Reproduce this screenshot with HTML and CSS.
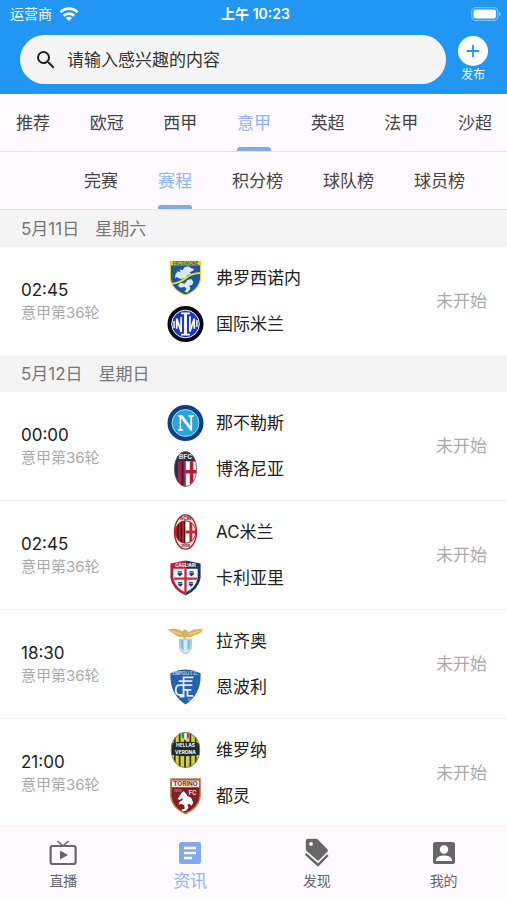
FILE: index.html
```
<!DOCTYPE html>
<html lang="zh-CN">

<head>
    <meta charset="UTF-8">
    <meta name="viewport" content="width=device-width, initial-scale=1.0">
    <title>意甲赛程</title>
    <link rel="stylesheet" href="styles.css">
</head>

<body>
    <header class="header">
        <div class="status">
            <div class="carrier">
                <span>运营商</span>
                <svg width="20" height="14" viewBox="0 0 20 14" fill="none" stroke="#fff" stroke-width="2.8">
                    <path d="M1.5 5.2a12 12 0 0 1 17 0M4.7 8.8a7.5 7.5 0 0 1 10.6 0" />
                    <path d="M10 14L6.9 11a4.4 4.4 0 0 1 6.2 0z" fill="#fff" stroke="none" />
                </svg>
            </div>
            <span class="clock">上午 10:23</span>
            <svg class="battery" width="30" height="14" viewBox="0 0 30 14">
                <rect x=".7" y=".7" width="26" height="12.6" rx="3.6" fill="none" stroke="#fff" stroke-opacity=".4" stroke-width="1.2" />
                <rect x="2.5" y="2.4" width="22.4" height="9.2" rx="2" fill="#fff" />
                <path d="M28 4.8v4.4q1.6-.7 1.6-2.2t-1.6-2.2z" fill="#fff" fill-opacity=".5" />
            </svg>
        </div>
        <div class="toolbar">
            <label class="search">
                <svg width="24" height="24" viewBox="0 0 24 24" fill="#222">
                    <path d="M15.5 14h-.79l-.28-.27A6.47 6.47 0 0 0 16 9.5 6.5 6.5 0 1 0 9.5 16c1.61 0 3.09-.59 4.23-1.57l.27.28v.79l5 4.99L20.49 19l-4.99-5zm-6 0a4.5 4.5 0 1 1 0-9 4.5 4.5 0 0 1 0 9z" />
                </svg>
                <input type="text" placeholder="请输入感兴趣的内容" aria-label="搜索">
            </label>
            <button class="publish" type="button">
                <svg width="30" height="30" viewBox="0 0 30 30">
                    <circle cx="15" cy="15" r="15" fill="#fff" />
                    <path d="M15 8.8v12.4M8.8 15h12.4" stroke="#2196f3" stroke-width="1.8" />
                </svg>
                <span>发布</span>
            </button>
        </div>
    </header>

    <nav class="tabs tabs-league">
        <a href="#">推荐</a>
        <a href="#">欧冠</a>
        <a href="#">西甲</a>
        <a href="#" class="active">意甲</a>
        <a href="#">英超</a>
        <a href="#">法甲</a>
        <a href="#">沙超</a>
    </nav>
    <nav class="tabs tabs-section">
        <a href="#">完赛</a>
        <a href="#" class="active">赛程</a>
        <a href="#">积分榜</a>
        <a href="#">球队榜</a>
        <a href="#">球员榜</a>
    </nav>

    <main class="schedule">
        <h2 class="date"><span>5月11日</span><span>星期六</span></h2>
        <div class="match">
            <div class="info">
                <div class="time">02:45</div>
                <div class="round">意甲第36轮</div>
            </div>
            <div class="teams">
                <div class="team">
                    <!-- Frosinone -->
                    <svg class="crest" viewBox="0 0 38 38">
                        <path d="M3.5 2h31v17q-1 12-15.5 17.5Q4.5 31 3.5 19z" fill="#1d569c" stroke="#e3d72d" stroke-width="1.2" />
                        <path d="M3.5 2h31v4h-31z" fill="#d9cf3c" />
                        <text x="19" y="5.5" font-size="4.5" font-weight="700" text-anchor="middle" fill="#2c4f6d">FROSINONE</text>
                        <path d="M9 15l2-3 3 1-1-3 3 1 2-3 4-1 3 2 3 1-2 2-3 1 2 2-4 1-2 3-5 1-4-2-2 1z" fill="#dce8f4" />
                        <path d="M11 27l3-3 4 1 3-4 4-1 2 3-1 3-3 1 1 3-3 4-3-1 2-3-2-2-4 1z" fill="#dce8f4" />
                        <path d="M4.5 25q9-1 15-6t14.5-5" fill="none" stroke="#e9dc2b" stroke-width="2" />
                    </svg>
                    <span>弗罗西诺内</span>
                </div>
                <div class="team">
                    <!-- Inter -->
                    <svg class="crest" viewBox="0 0 38 38">
                        <circle cx="19" cy="19" r="18.5" fill="#05070f" />
                        <circle cx="19" cy="19" r="14.2" fill="#1838c4" stroke="#fff" stroke-width="1" />
                        <path d="M14.5 8h9M14.5 30h9" stroke="#fff" stroke-width="1.8" />
                        <path d="M19 8v22" stroke="#fff" stroke-width="3" />
                        <path d="M14.5 12v15M23.5 26V11" stroke="#fff" stroke-width="1.8" />
                        <path d="M14.5 27L10 13.5V24M23.5 27L28 13.5V24" stroke="#fff" stroke-width="1.8" fill="none" />
                        <path d="M7.3 16v7M30.7 15v7" stroke="#fff" stroke-width="1.4" />
                    </svg>
                    <span>国际米兰</span>
                </div>
            </div>
            <div class="state">未开始</div>
        </div>

        <h2 class="date"><span>5月12日</span><span>星期日</span></h2>
        <div class="match">
            <div class="info">
                <div class="time">00:00</div>
                <div class="round">意甲第36轮</div>
            </div>
            <div class="teams">
                <div class="team">
                    <!-- Napoli -->
                    <svg class="crest" viewBox="0 0 38 38">
                        <circle cx="19" cy="19" r="18.5" fill="#0a4187" />
                        <circle cx="19" cy="19" r="13.8" fill="#2aa5dc" stroke="#d5edf8" stroke-width=".8" />
                        <path d="M11.5 11H16l8 11V13l-2-.7V11h5.5v1.3l-1.7.7v14h-1.6L14.5 14.5V25l2 .7V27h-5v-1.3l1.5-.7V13l-1.5-.7z" fill="#fff" />
                    </svg>
                    <span>那不勒斯</span>
                </div>
                <div class="team">
                    <!-- Bologna -->
                    <svg class="crest" viewBox="0 0 38 38">
                        <clipPath id="bologna">
                            <ellipse cx="19" cy="19" rx="11.5" ry="18" />
                        </clipPath>
                        <g clip-path="url(#bologna)">
                            <path d="M7 0h24v38H7z" fill="#1c2b50" />
                            <path d="M11 11h4v27h-4z" fill="#b61d38" />
                            <path d="M19 11h13v27H19z" fill="#f6f3f3" />
                            <path d="M23.5 11H27v27h-3.5zM19 20h12v3.5H19z" fill="#bb1c35" />
                            <path d="M17 11h2v27h-2z" fill="#b61d38" />
                            <path d="M7 1h24v11q-12-4-24 0z" fill="#26334e" />
                        </g>
                        <text x="19" y="9" font-size="7" font-weight="700" text-anchor="middle" fill="#e4e6e8">BFC</text>
                        <ellipse cx="19" cy="19" rx="11.5" ry="18" fill="none" stroke="#746b72" stroke-width=".8" />
                    </svg>
                    <span>博洛尼亚</span>
                </div>
            </div>
            <div class="state">未开始</div>
        </div>
        <div class="match">
            <div class="info">
                <div class="time">02:45</div>
                <div class="round">意甲第36轮</div>
            </div>
            <div class="teams">
                <div class="team">
                    <!-- Milan -->
                    <svg class="crest" viewBox="0 0 38 38">
                        <ellipse cx="19" cy="19" rx="11.3" ry="17.6" fill="#e8dddd" stroke="#aa2028" stroke-width="1.4" />
                        <text x="19" y="7" font-size="5" font-weight="700" text-anchor="middle" fill="#972a30">ACM</text>
                        <clipPath id="milan">
                            <ellipse cx="19" cy="19" rx="10.5" ry="11.5" />
                        </clipPath>
                        <g clip-path="url(#milan)">
                            <path d="M8 7h11v24H8z" fill="#c71c27" />
                            <path d="M10.5 7H12v24h-1.5zM14 7h1.5v24H14zM17.5 7H19v24h-1.5z" fill="#25191c" />
                            <path d="M19 8h11v22H19z" fill="#fff" />
                            <path d="M23 7h3v24h-3zM19 17.5h11v3H19z" fill="#d02230" />
                        </g>
                        <ellipse cx="19" cy="19" rx="10.5" ry="11.5" fill="none" stroke="#a52229" />
                        <text x="19" y="34.5" font-size="4" font-weight="700" text-anchor="middle" fill="#6e3639">1899</text>
                    </svg>
                    <span>AC米兰</span>
                </div>
                <div class="team">
                    <!-- Cagliari -->
                    <svg class="crest" viewBox="0 0 38 38">
                        <path d="M19 1L3.5 4v15q2 12 15.5 18z" fill="#b91f3d" />
                        <path d="M19 1l15.5 3v15q-2 12-15.5 18z" fill="#183661" />
                        <text x="19" y="7.8" font-size="4.5" font-weight="700" text-anchor="middle" fill="#fff">CAGLIARI</text>
                        <path d="M6.5 9.5h25V19q-2 10-12.5 15Q8.5 29 6.5 19z" fill="#f7f8fa" />
                        <path d="M17.8 9.5h2.4V34h-2.4zM7 18.5h24v2.4H7z" fill="#ca2943" />
                        <path d="M11 12h4l1 3-3 2.5-2-2zM23 12h4l1 3-3 2.5-2-2zM11.5 23h4l.5 3-2.5 2-2-2zM22.5 23h4l.5 3-2.5 2-2-2z" fill="#1d3a68" />
                        <path d="M10.5 13.5h5M22.5 13.5h5M11 24.5h5M22 24.5h5" stroke="#b8c5d6" stroke-width=".8" />
                    </svg>
                    <span>卡利亚里</span>
                </div>
            </div>
            <div class="state">未开始</div>
        </div>
        <div class="match">
            <div class="info">
                <div class="time">18:30</div>
                <div class="round">意甲第36轮</div>
            </div>
            <div class="teams">
                <div class="team">
                    <!-- Lazio -->
                    <svg class="crest" viewBox="0 0 38 38">
                        <path d="M1 7q9-2 15 2l2-2 3 1.5 1 1.5q6-4 15-3-2 5-9 6-3 3-8 2l-2 2-2-2q-5 0-8-3-4-1-7-5z" fill="#dcb15b" />
                        <path d="M5 9l10 3M33 9l-10 3" stroke="#f3dda3" fill="none" />
                        <path d="M13 17h12v7q0 6-6 8-6-2-6-8z" fill="#d8ebf3" stroke="#9cb9c6" />
                        <path d="M14 18h3v11q-3-2-3-5zM21 18h3v6q0 3-3 5z" fill="#6fc1e5" />
                    </svg>
                    <span>拉齐奥</span>
                </div>
                <div class="team">
                    <!-- Empoli -->
                    <svg class="crest" viewBox="0 0 38 38">
                        <path d="M3.5 5Q19-3 34.5 5q1 21-15.5 32Q2.5 26 3.5 5z" fill="#2462a9" />
                        <text x="19" y="6.5" font-size="4.5" font-weight="700" text-anchor="middle" fill="#bfd5ec">EMPOLI F.C.</text>
                        <path d="M27 9H17v20h-4M12 13h14M17 17h9M25 22h-9M27 28h-6v-6M18 17h-5q-4 0-4 5t4 5h5" fill="none" stroke="#e6f0fa" stroke-width="1.8" />
                        <text x="21" y="33" font-size="3" fill="#bfd5ec">1920</text>
                    </svg>
                    <span>恩波利</span>
                </div>
            </div>
            <div class="state">未开始</div>
        </div>
        <div class="match">
            <div class="info">
                <div class="time">21:00</div>
                <div class="round">意甲第36轮</div>
            </div>
            <div class="teams">
                <div class="team">
                    <!-- Verona -->
                    <svg class="crest" viewBox="0 0 38 38">
                        <clipPath id="verona">
                            <ellipse cx="19" cy="19" rx="15" ry="18.5" />
                        </clipPath>
                        <g clip-path="url(#verona)">
                            <path d="M4 0h30v38H4z" fill="#d6cf42" />
                            <path d="M8 0v38M13 0v38M18.5 0v38M24 0v38M29.5 0v38" stroke="#26352f" stroke-width="1.8" />
                            <path d="M4 12q15-3 30 0v12q-15 3-30 0z" fill="#1f2b2c" />
                            <path d="M15 1h8v5l-4 3-4-3z" fill="#fff" />
                            <path d="M15 1h2.7v7L15 6z" fill="#169552" />
                            <path d="M20.3 1H23v5l-2.7 2z" fill="#ce303a" />
                        </g>
                        <text x="19" y="16" font-size="5" font-weight="700" text-anchor="middle" fill="#fff">HELLAS</text>
                        <text x="19" y="23" font-size="5" font-weight="700" text-anchor="middle" fill="#fff">VERONA</text>
                        <ellipse cx="19" cy="19" rx="14.6" ry="18" fill="none" stroke="#8b8940" />
                    </svg>
                    <span>维罗纳</span>
                </div>
                <div class="team">
                    <!-- Torino -->
                    <svg class="crest" viewBox="0 0 38 38">
                        <path d="M4 1.5h30V19q-1 12-15 18Q5 31 4 19z" fill="#811f25" stroke="#bd7b42" stroke-width="1.4" />
                        <path d="M5 3h28v7H5z" fill="#fff4e8" />
                        <text x="19" y="8.9" font-size="6.5" font-weight="700" text-anchor="middle" fill="#892529">TORINO</text>
                        <text x="22" y="17.5" font-size="6.5" font-weight="700" fill="#ead2bd">FC</text>
                        <text x="7" y="14.5" font-size="3.5" fill="#d9aa98">1906</text>
                        <path d="M15 16l2-2 2 2 2 3 4 2 2 5-2 3-2-2-2 1 1 3-2 3-4 1-1-2 3-1v-3l-3-2-3 1 1-3 3-2v-2l-3 2-2-1z" fill="#fff" />
                    </svg>
                    <span>都灵</span>
                </div>
            </div>
            <div class="state">未开始</div>
        </div>
    </main>

    <nav class="bottom-nav">
        <a href="#">
            <svg width="32" height="32" viewBox="0 0 32 32" fill="none" stroke="#666" stroke-width="2.2">
                <rect x="3.6" y="9" width="25" height="18" rx="2" />
                <path d="M10.5 4L16 9l5.5-5" stroke-width="1.6" />
                <path d="M13 13.5v9l8-4.5z" fill="#666" stroke="none" />
            </svg>
            <span>直播</span>
        </a>
        <a href="#" class="active">
            <svg width="32" height="32" viewBox="0 0 32 32">
                <rect x="5" y="5" width="22" height="22" rx="2.5" fill="#82a9e9" />
                <path d="M10 11h12M10 16h12M10 21h8" stroke="#fff" stroke-width="2.4" />
            </svg>
            <span>资讯</span>
        </a>
        <a href="#">
            <svg width="32" height="32" viewBox="0 0 32 32">
                <path d="M4.8 4q0-2.2 2.2-2.2h8q1 0 1.8.8l9.6 9.6q1.2 1.3 0 2.6l-8 8q-1.4 1.2-2.8 0L5.6 14q-.8-.8-.8-2zM10 5a1.9 1.9 0 1 0 0 3.8A1.9 1.9 0 0 0 10 5z" fill="#666" fill-rule="evenodd" />
                <path d="M4.6 16.8L17 28l9.8-9.8" fill="none" stroke="#666" stroke-width="2.4" />
            </svg>
            <span>发现</span>
        </a>
        <a href="#">
            <svg width="32" height="32" viewBox="0 0 32 32">
                <rect x="5" y="5" width="22" height="22" rx="2.5" fill="#666" />
                <circle cx="16" cy="12.5" r="4.2" fill="#fff" />
                <path d="M8 24v-1.5q1.5-4 8-4t8 4V24z" fill="#fff" />
            </svg>
            <span>我的</span>
        </a>
    </nav>
</body>

</html>
```
FILE: styles.css
```
* {
    box-sizing: border-box;
}

body {
    display: flex;
    flex-direction: column;
    height: 100vh;
    margin: 0;
    font-family: Inter, "Noto Sans CJK SC", sans-serif;
    font-size: 17px;
    line-height: 24px;
    color: #222;
    background: #fff;
}

a {
    color: inherit;
    text-decoration: none;
}

svg {
    display: block;
    flex-shrink: 0;
}

/* header */
.header {
    flex-shrink: 0;
    padding-bottom: 10px;
    background: #2196f3;
    color: #fff;
}

.status {
    display: grid;
    grid-template-columns: 1fr auto 1fr;
    align-items: center;
    height: 28px;
    padding: 0 6px 0 10px;
    font-size: 14px;
}

.carrier {
    display: flex;
    align-items: center;
    gap: 7px;
}

.clock {
    font-weight: 600;
}

.battery {
    justify-self: end;
}

.toolbar {
    display: flex;
    align-items: flex-start;
    gap: 12px;
    padding: 7px 19px 0 20px;
}

.search {
    display: flex;
    flex: 1;
    align-items: center;
    gap: 9px;
    height: 49px;
    padding: 0 14px;
    border-radius: 25px;
    background: #f5f5f5;
}

.search input {
    flex: 1;
    min-width: 0;
    padding: 0;
    border: 0;
    outline: 0;
    background: none;
    font: inherit;
    color: #333;
}

.search input::placeholder {
    color: #333;
    opacity: 1;
}

.publish {
    display: flex;
    flex-direction: column;
    align-items: center;
    padding: 1px 0 0;
    border: 0;
    background: none;
    color: #fff;
    font-family: inherit;
    font-size: 12px;
    line-height: 18px;
}

/* tabs */
.tabs {
    display: flex;
    flex-shrink: 0;
    border-bottom: 1px solid #e9e3e8;
    background: #fefaff;
    color: #444;
}

.tabs a {
    padding-top: 17px;
    white-space: nowrap;
}

.tabs a::after {
    content: "";
    display: block;
    height: 4px;
    margin-top: 12px;
    border-radius: 3px 3px 0 0;
}

.tabs .active {
    color: #8fb4f5;
}

.tabs .active::after {
    background: #82a9e9;
}

.tabs-league {
    justify-content: space-between;
    padding: 0 15px 0 16px;
}

.tabs-section {
    gap: 40px;
    padding-left: 84px;
}

/* schedule */
.schedule {
    flex: 1;
    overflow: hidden auto;
    scrollbar-width: none;
}

.date {
    display: flex;
    gap: 16px;
    margin: 0;
    padding: 7px 21px 6px;
    background: #f4f4f4;
    color: #777;
    font-size: 17px;
    font-weight: 400;
}

.match {
    display: grid;
    grid-template-columns: 146px 1fr auto;
    align-items: center;
    padding: 12px 20px 12px 21px;
    border-bottom: 1px solid #f1f1f1;
}

.match:has(+ .date) {
    border-bottom: 0;
}

.round {
    color: #aaa;
    font-size: 15px;
    line-height: 22px;
}

.teams {
    display: grid;
    gap: 8px;
}

.team {
    display: flex;
    align-items: center;
    gap: 12px;
}

.crest {
    width: 37px;
    height: 38px;
}

.state {
    color: #aaa;
}

/* bottom navigation */
.bottom-nav {
    display: flex;
    flex-shrink: 0;
    height: 74px;
    padding-top: 10px;
    border-top: 1px solid #f3eff3;
    background: #fefaff;
    color: #666;
    font-size: 14px;
}

.bottom-nav a {
    display: flex;
    flex: 1;
    flex-direction: column;
    align-items: center;
}

.bottom-nav .active {
    color: #8fb4f5;
    font-size: 17px;
}
```
